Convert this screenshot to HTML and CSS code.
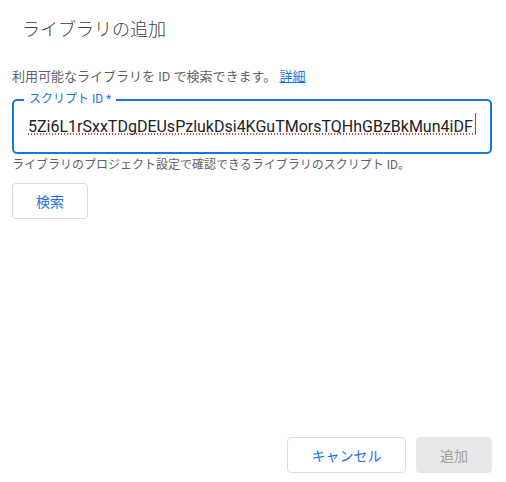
FILE: index.html
```html
<!DOCTYPE html>
<html lang="ja">
<head>
<meta charset="utf-8">
<title>ライブラリの追加</title>
<link rel="stylesheet" href="styles.css">
</head>
<body>
<div class="dialog">
  <h1 class="title">ライブラリの追加</h1>
  <p class="desc">利用可能なライブラリを ID で検索できます。 <a href="#">詳細</a></p>
  <div class="field">
    <label class="field-label" for="script-id">スクリプト ID *</label>
    <input class="field-input" id="script-id" type="text" spellcheck="false" value="5Zi6L1rSxxTDgDEUsPzlukDsi4KGuTMorsTQHhGBzBkMun4iDF">
    <span class="spell-mark"></span>
    <span class="caret"></span>
  </div>
  <p class="hint">ライブラリのプロジェクト設定で確認できるライブラリのスクリプト ID。</p>
  <div>
    <button class="btn btn-search" type="button">検索</button>
  </div>
  <div class="actions">
    <button class="btn btn-cancel" type="button">キャンセル</button>
    <button class="btn btn-add" type="button" disabled>追加</button>
  </div>
</div>
</body>
</html>
```

FILE: styles.css
```css
*{margin:0;padding:0;box-sizing:border-box;}
body{background:#fff;font-family:Roboto,"Noto Sans CJK JP",sans-serif;color:#202124;}
.dialog{height:482px;display:flex;flex-direction:column;padding:18px 14px 9px 12px;}
.title{margin-left:10px;font-size:18px;font-weight:300;line-height:24px;color:#3c4043;}
.desc{margin-top:25px;font-size:13px;line-height:20px;color:#5f6368;}
.desc a{color:#1a73e8;text-decoration:underline;}
.field{position:relative;margin-top:12px;}
.field-label{position:absolute;left:12px;top:-8px;padding:0 5px;background:#fff;font-size:12px;line-height:16px;color:#1a73e8;}
.field-input{display:block;width:100%;height:55px;padding:0 14px;border:2px solid #1a73e8;border-radius:5px;outline:none;font-family:Roboto,sans-serif;font-size:16px;color:#202124;}
/* spellcheck dots and caret, drawn over the input */
.spell-mark{position:absolute;left:15px;top:34px;width:447px;height:2px;background:radial-gradient(circle,#ea4335 0.9px,transparent 1.1px) 0 0/3px 2px repeat-x;}
.caret{position:absolute;left:463px;top:14px;width:1px;height:22px;background:#1a73e8;}
.hint{margin-top:3px;font-size:12px;line-height:16px;color:#5f6368;}
.btn{height:36px;border:1px solid #dadce0;border-radius:4px;background:#fff;font-family:Roboto,"Noto Sans CJK JP",sans-serif;font-size:14px;color:#1a73e8;cursor:pointer;}
.btn-search{margin-top:10px;width:76px;}
.actions{margin-top:auto;display:flex;justify-content:flex-end;gap:10px;}
.btn-cancel{width:119px;}
.btn-add{width:76px;background:#e8e8e8;border-color:#e8e8e8;color:#a0a0a0;cursor:default;}
```
